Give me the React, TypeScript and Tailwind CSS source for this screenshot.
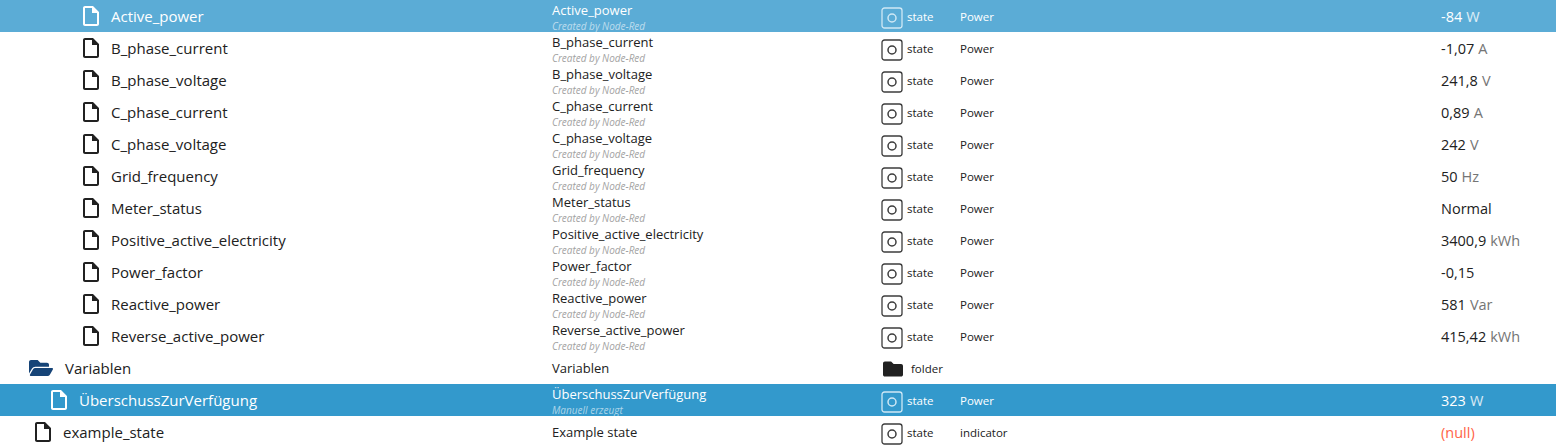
import React from 'react';
import { FaFolder, FaFolderOpen } from 'react-icons/fa';

type Row = {
  id: string;
  name: string;
  desc?: string;
  sub?: string;
  kind?: 'state' | 'folder';
  role?: string;
  value?: string;
  unit?: string;
  indent: string;
  tone?: 'hover' | 'selected';
  isFolder?: boolean;
};

const node = 'Created by Node-Red';
const deep = 'pl-[79px]';

const rows: Row[] = [
  { id: 'Active_power', name: 'Active_power', sub: node, role: 'Power', value: '-84', unit: 'W', indent: deep, tone: 'hover' },
  { id: 'B_phase_current', name: 'B_phase_current', sub: node, role: 'Power', value: '-1,07', unit: 'A', indent: deep },
  { id: 'B_phase_voltage', name: 'B_phase_voltage', sub: node, role: 'Power', value: '241,8', unit: 'V', indent: deep },
  { id: 'C_phase_current', name: 'C_phase_current', sub: node, role: 'Power', value: '0,89', unit: 'A', indent: deep },
  { id: 'C_phase_voltage', name: 'C_phase_voltage', sub: node, role: 'Power', value: '242', unit: 'V', indent: deep },
  { id: 'Grid_frequency', name: 'Grid_frequency', sub: node, role: 'Power', value: '50', unit: 'Hz', indent: deep },
  { id: 'Meter_status', name: 'Meter_status', sub: node, role: 'Power', value: 'Normal', indent: deep },
  { id: 'Positive_active_electricity', name: 'Positive_active_electricity', sub: node, role: 'Power', value: '3400,9', unit: 'kWh', indent: deep },
  { id: 'Power_factor', name: 'Power_factor', sub: node, role: 'Power', value: '-0,15', indent: deep },
  { id: 'Reactive_power', name: 'Reactive_power', sub: node, role: 'Power', value: '581', unit: 'Var', indent: deep },
  { id: 'Reverse_active_power', name: 'Reverse_active_power', sub: node, role: 'Power', value: '415,42', unit: 'kWh', indent: deep },
  { id: 'Variablen', name: 'Variablen', indent: 'pl-[29px]', kind: 'folder', isFolder: true },
  { id: 'Ueberschuss', name: 'ÜberschussZurVerfügung', sub: 'Manuell erzeugt', role: 'Power', value: '323', unit: 'W', indent: 'pl-[47px]', tone: 'selected' },
  { id: 'example_state', name: 'example_state', desc: 'Example state', role: 'indicator', value: '(null)', indent: 'pl-[31px]' },
];

const FileIcon = () => (
  <svg viewBox="0 0 24 24" className="w-6 h-6 shrink-0" fill="currentColor">
    <path d="M14 2H6c-1.1 0-1.99.9-1.99 2L4 20c0 1.1.89 2 1.99 2H18c1.1 0 2-.9 2-2V8l-6-6zM6 20V4h7v5h5v11H6z" />
  </svg>
);

const StateIcon = () => (
  <svg viewBox="0 0 22 22" className="w-[22px] h-[22px] shrink-0" fill="none" stroke="currentColor">
    <rect x="1" y="1" width="20" height="20" rx="2.5" strokeWidth="1.3" />
    <circle cx="11" cy="11" r="4" strokeWidth="1.5" />
  </svg>
);

const App: React.FC = () => {
  return (
    <div className="w-[1556px] h-[447px] overflow-hidden bg-white font-['Open_Sans',sans-serif] text-[#212121]">
      {rows.map((r) => {
        const active = !!r.tone;
        return (
          <div
            key={r.id}
            className={`flex items-center h-8 ${r.tone === 'hover' ? 'bg-[#5bacd6] text-white' : r.tone === 'selected' ? 'bg-[#3399cc] text-white' : ''}`}
          >
            <div className={`w-[552px] flex items-center shrink-0 ${r.indent}`}>
              {r.isFolder ? (
                <FaFolderOpen className="w-6 h-6 text-[#164477] shrink-0" />
              ) : (
                <span className={active ? 'text-white' : 'text-[#212121]'}>
                  <FileIcon />
                </span>
              )}
              <span className={`text-[15px] whitespace-nowrap ${r.isFolder ? 'ml-3' : 'ml-2'}`}>{r.name}</span>
            </div>

            <div className="w-[329px] shrink-0 flex flex-col h-8">
              <span className={`text-[13px] leading-[16px] whitespace-nowrap ${r.sub ? 'mt-[2px]' : 'mt-2'}`}>{r.desc ?? r.name}</span>
              {r.sub && (
                <span className={`mt-px text-[10px] leading-[14px] italic whitespace-nowrap ${active ? 'text-white/60' : 'text-[#a3a3a3]'}`}>{r.sub}</span>
              )}
            </div>

            <div className="w-[79px] shrink-0 flex items-center text-[11.5px] pt-[2px]">
              {r.kind === 'folder' ? (
                <>
                  <FaFolder className="w-[20px] h-[20px] ml-[2px] text-[#212121] shrink-0" />
                  <span className="ml-[8px]">folder</span>
                </>
              ) : (
                <>
                  <span className={`flex mt-px ${active ? 'text-[#cfe8f5]' : 'text-[#3c3c3c]'}`}>
                    <StateIcon />
                  </span>
                  <span className="ml-[4px]">state</span>
                </>
              )}
            </div>

            <div className="w-[481px] shrink-0 text-[11.5px] pt-[2px]">{r.role}</div>

            <div className="text-[14.5px] whitespace-nowrap pt-px">
              <span className={r.value === '(null)' ? 'text-[#ff6347]' : ''}>{r.value}</span>
              {r.unit && <span className={`ml-1 ${active ? 'text-white/80' : 'text-[#757575]'}`}>{r.unit}</span>}
            </div>
          </div>
        );
      })}
    </div>
  );
};

export default App;
